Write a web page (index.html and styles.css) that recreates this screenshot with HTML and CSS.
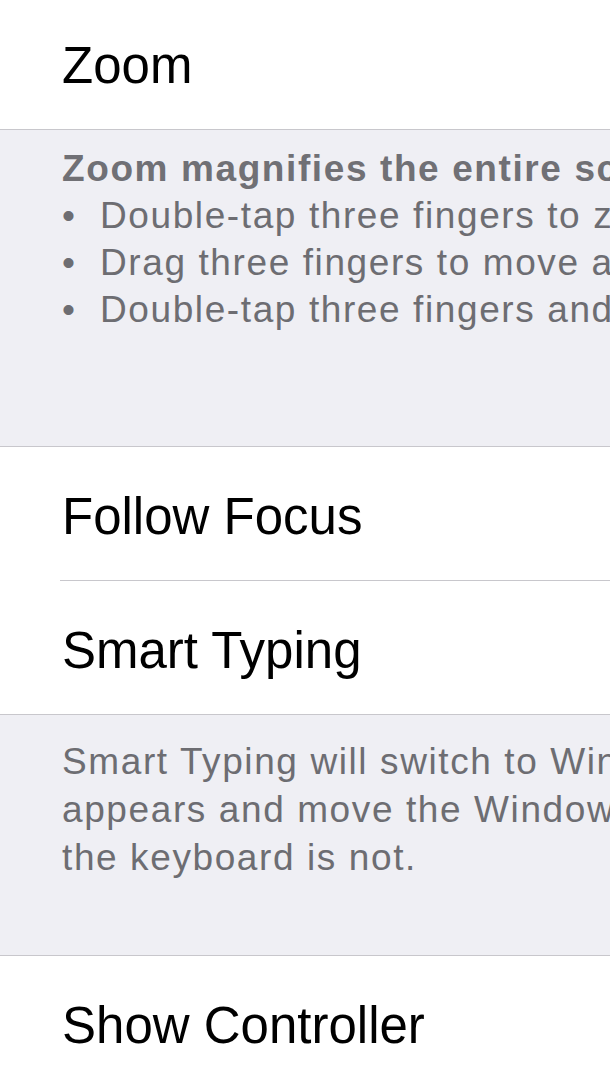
FILE: index.html
```html
<!DOCTYPE html>
<html lang="en">
<head>
<meta charset="utf-8">
<title>Zoom</title>
<link rel="stylesheet" href="styles.css">
</head>
<body>
<div class="screen">
  <div class="group group-first">
    <div class="cell cell-first"><span class="label">Zoom</span></div>
  </div>
  <div class="footer footer-zoom">
    <div class="line strong">Zoom magnifies the entire screen:</div>
    <div class="line bullet"><span class="dot">•</span><span>Double-tap three fingers to zoom</span></div>
    <div class="line bullet"><span class="dot">•</span><span>Drag three fingers to move around the screen</span></div>
    <div class="line bullet"><span class="dot">•</span><span>Double-tap three fingers and drag to change zoom</span></div>
  </div>
  <div class="group">
    <div class="cell"><span class="label">Follow Focus</span></div>
    <div class="cell"><span class="label">Smart Typing</span></div>
  </div>
  <div class="footer footer-typing">
    <div class="line">Smart Typing will switch to Window Zoom when a keyboard</div>
    <div class="line">appears and move the Window so that text is centered but</div>
    <div class="line">the keyboard is not.</div>
  </div>
  <div class="group">
    <div class="cell"><span class="label">Show Controller</span></div>
  </div>
</div>
</body>
</html>
```

FILE: styles.css
```css
html, body {
  margin: 0;
  padding: 0;
  background: #efeff4;
}

body {
  width: 610px;
  height: 1085px;
  overflow: hidden;
  font-family: "Liberation Sans", Arial, sans-serif;
}

.screen {
  width: 610px;
  overflow: hidden;
}

.group {
  background: #ffffff;
  border-top: 1px solid #c8c7cc;
  border-bottom: 1px solid #c8c7cc;
}

.group-first {
  border-top: none;
  margin-top: -4px;
}

.cell {
  position: relative;
  box-sizing: border-box;
  height: 133px;
  padding: 6px 0 0 62px;
  line-height: 127px;
  font-size: 51px;
  color: #000000;
  white-space: nowrap;
}

.cell + .cell {
  margin-top: 1px;
}

.cell + .cell::before {
  content: "";
  position: absolute;
  left: 60px;
  right: 0;
  top: -1px;
  height: 1px;
  background: #c8c7cc;
}

.footer {
  box-sizing: border-box;
  padding-left: 62px;
  font-size: 37px;
  line-height: 47px;
  color: #6d6d72;
  letter-spacing: 1.6px;
  white-space: nowrap;
}

.footer-zoom {
  height: 316px;
  padding-top: 15px;
}

.footer-typing {
  height: 240px;
  padding-top: 23px;
  line-height: 48px;
}

.line {
  white-space: nowrap;
}

.strong {
  font-weight: bold;
  letter-spacing: 1.6px;
  color: #707075;
}

.bullet {
  display: flex;
}

.dot {
  flex: 0 0 38px;
  width: 38px;
  letter-spacing: 0;
}
```
